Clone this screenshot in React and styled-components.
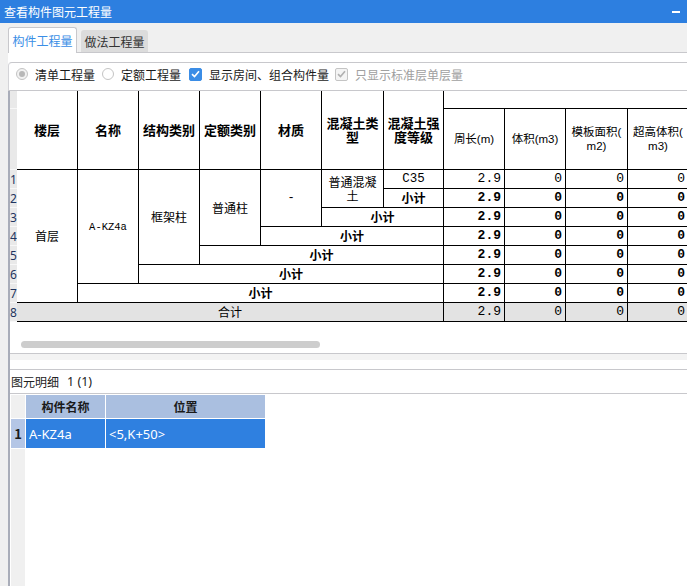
import React from "react";
import styled, { createGlobalStyle } from "styled-components";

const GlobalStyle = createGlobalStyle`
  html, body {
    margin: 0;
    padding: 0;
    background: #f0f0f0;
  }
  body {
    font-family: "Noto Sans CJK SC", "Noto Sans", sans-serif;
    font-size: 12px;
    color: #1a1a1a;
    overflow: hidden;
  }
  * { box-sizing: border-box; }
`;

const Window = styled.div`
  width: 687px;
  height: 586px;
  display: flex;
  flex-direction: column;
  overflow: hidden;
  background: #f0f0f0;
`;

const TitleBar = styled.div`
  height: 23px;
  flex: none;
  background: #2d7fe0;
  color: #fff;
  display: flex;
  align-items: center;
  justify-content: space-between;
  padding: 0 7px 0 4px;
  font-size: 12px;
`;

const MinButton = styled.span`
  width: 8px;
  height: 2px;
  background: #fff;
`;

const TabStrip = styled.div`
  height: 29px;
  flex: none;
  display: flex;
  align-items: flex-end;
  gap: 4px;
  padding-left: 8px;
`;

const Tab = styled.div`
  position: relative;
  z-index: 1;
  display: flex;
  align-items: center;
  justify-content: center;
  font-size: 12px;
  border-radius: 3px 3px 0 0;
  width: ${p => (p.$active ? 69 : 67)}px;
  height: ${p => (p.$active ? 26 : 22)}px;
  margin-bottom: ${p => (p.$active ? -1 : 0)}px;
  background: ${p => (p.$active ? "#fff" : "#dcdcdc")};
  color: ${p => (p.$active ? "#3a8ee6" : "#333")};
  border: ${p => (p.$active ? "1px solid #c8c8cc" : "none")};
  border-bottom: none;
`;

const Panel = styled.div`
  flex: 1;
  min-height: 0;
  margin-left: 8px;
  background: #fff;
  border-top: 1px solid #c8c8cc;
  padding-top: 9px;
  display: flex;
  flex-direction: column;
`;

const Options = styled.div`
  height: 29px;
  flex: none;
  display: flex;
  align-items: center;
  padding: 0 0 5px 7px;
  border-top: 1px solid #c8c8cc;
  border-left: 1px solid #d4d4d8;
  border-bottom: 1px solid #c8c8cc;
  border-top-left-radius: 4px;
`;

const Option = styled.label`
  display: flex;
  align-items: center;
  gap: 7px;
  margin-right: ${p => p.$mr}px;
  color: ${p => (p.$disabled ? "#a0a0a0" : "#1a1a1a")};
  font-size: 12px;
`;

const Radio = styled.span`
  width: 12px;
  height: 12px;
  border-radius: 50%;
  border: 1px solid #c4c4c4;
  background: ${p => (p.$on ? "#f2f2f2" : "#fff")};
  display: flex;
  align-items: center;
  justify-content: center;
  &::after {
    content: "";
    width: 6px;
    height: 6px;
    border-radius: 50%;
    background: ${p => (p.$on ? "#b8b8b8" : "transparent")};
  }
`;

const Check = styled.span`
  width: 13px;
  height: 13px;
  border-radius: 2px;
  display: flex;
  align-items: center;
  justify-content: center;
  background: ${p => (p.$disabled ? "#f4f4f4" : "#3b8de6")};
  border: 1px solid ${p => (p.$disabled ? "#c4c4c4" : "#3b8de6")};
`;

const Lower = styled.div`
  flex: 1;
  min-height: 0;
  display: flex;
  flex-direction: column;
  border-left: 2px solid #a9adb9;
`;

const GridSection = styled.div`
  height: 263px;
  flex: none;
  overflow: hidden;
  border-bottom: 1px solid #c8c8cc;
`;

const Table = styled.div`
  display: grid;
  grid-template-columns: 7px 61px 61px 61px 61px 61px 62px 60px 61px 61px 62px 61px;
  grid-template-rows: 18px 61px repeat(8, 19px);
  width: 679px;
  font-size: 12px;
  line-height: 14px;
  color: #000;
`;

const Cell = styled.div`
  grid-column: ${p => p.$c} / span ${p => p.$cs || 1};
  grid-row: ${p => p.$r} / span ${p => p.$rs || 1};
  border-right: 1px solid #000;
  border-bottom: 1px solid #000;
  display: flex;
  align-items: center;
  justify-content: ${p => (p.$right ? "flex-end" : "center")};
  text-align: center;
  padding: 0 3px;
  font-weight: ${p => (p.$bold ? 700 : 400)};
  background: ${p => (p.$shade ? "#e3e3e3" : "#fff")};
`;

const HeadCell = styled(Cell)`
  font-size: 13px;
  font-weight: 700;
`;

const UnitHead = styled(Cell)`
  font-size: 11.5px;
  font-family: "Liberation Sans", "Noto Sans CJK SC", sans-serif;
`;

const Code = styled(Cell)`
  font-family: "Liberation Mono", monospace;
  font-size: ${p => p.$size || 13}px;
`;

const RowNum = styled.div`
  grid-column: 1;
  grid-row: ${p => p.$r};
  background: #e9e9e9;
  border-bottom: 1px solid #f7f7f7;
  display: flex;
  align-items: center;
  justify-content: center;
  padding-top: 2px;
  font-family: "Noto Sans", sans-serif;
  font-size: 12px;
  color: #1f3560;
`;

const ScrollThumb = styled.div`
  margin: 19px 0 0 11px;
  width: 299px;
  height: 7px;
  border-radius: 4px;
  background: #cdcdcd;
`;

const Splitter = styled.div`
  height: 15px;
  flex: none;
  background: linear-gradient(#f3f3f3 0 6px, #fff 6px);
`;

const DetailLabel = styled.div`
  height: 25px;
  flex: none;
  display: flex;
  align-items: center;
  gap: 8px;
  padding-left: 1px;
  border-top: 1px solid #c8c8cc;
  border-bottom: 1px solid #c8c8cc;
  font-size: 12px;
  color: #222;
`;

const Count = styled.span`
  font-family: "Noto Sans", sans-serif;
  font-size: 12.5px;
`;

const DetailGrid = styled.div`
  flex: 1;
  display: grid;
  grid-template-columns: 14px 79px 159px;
  grid-template-rows: 23px 29px 1fr;
  gap: 1px;
  padding: 1px 0 0 1px;
  background: #fff;
`;

const Corner = styled.div`
  background: ${p => p.$sel ? "#b4c6e6" : "#f0f0f0"};
  display: flex;
  align-items: center;
  justify-content: center;
  font-weight: 700;
  font-size: 13px;
`;

const ColHead = styled.div`
  background: #aabfe0;
  display: flex;
  align-items: center;
  justify-content: center;
  font-weight: 700;
  font-size: 12px;
  color: #1a1a1a;
`;

const SelCell = styled.div`
  background: #2f80e0;
  color: #fff;
  display: flex;
  align-items: center;
  padding-left: 3px;
  font-family: "Noto Sans", sans-serif;
  font-size: 13px;
`;

const tick = (color) => (
  <svg width="9" height="8" viewBox="0 0 9 8">
    <path d="M1 4.2 L3.5 6.6 L8 1.2" fill="none" stroke={color} strokeWidth="1.6" />
  </svg>
);

const nums = [
  { v: ["2.9", "0", "0", "0"], bold: false },
  { v: ["2.9", "0", "0", "0"], bold: true },
  { v: ["2.9", "0", "0", "0"], bold: true },
  { v: ["2.9", "0", "0", "0"], bold: true },
  { v: ["2.9", "0", "0", "0"], bold: true },
  { v: ["2.9", "0", "0", "0"], bold: true },
  { v: ["2.9", "0", "0", "0"], bold: true },
  { v: ["2.9", "0", "0", "0"], bold: false, shade: true },
];

const heads = ["楼层", "名称", "结构类别", "定额类别", "材质", "混凝土类型", "混凝土强度等级"];

export default function App() {
  return (
    <Window>
      <GlobalStyle />
      <TitleBar>
        <span>查看构件图元工程量</span>
        <MinButton />
      </TitleBar>
      <TabStrip>
        <Tab $active>构件工程量</Tab>
        <Tab>做法工程量</Tab>
      </TabStrip>
      <Panel>
        <Options>
          <Option $mr={7}><Radio $on />清单工程量</Option>
          <Option $mr={8}><Radio />定额工程量</Option>
          <Option $mr={6}><Check>{tick("#fff")}</Check>显示房间、组合构件量</Option>
          <Option $disabled><Check $disabled>{tick("#b0b0b0")}</Check>只显示标准层单层量</Option>
        </Options>
        <Lower>
          <GridSection>
            <Table>
              <RowNum $r={1} />
              <RowNum $r={2} />
              {nums.map((_, i) => (
                <RowNum key={i} $r={i + 3}>{i + 1}</RowNum>
              ))}

              {heads.map((h, i) => (
                <HeadCell key={h} $c={i + 2} $r={1} $rs={2}>{h}</HeadCell>
              ))}
              <Cell $c={9} $cs={4} $r={1} />
              <UnitHead $c={9} $r={2}>周长(m)</UnitHead>
              <UnitHead $c={10} $r={2}>体积(m3)</UnitHead>
              <UnitHead $c={11} $r={2}>模板面积(<br />m2)</UnitHead>
              <UnitHead $c={12} $r={2}>超高体积(<br />m3)</UnitHead>

              <Cell $c={2} $r={3} $rs={7}>首层</Cell>
              <Code $c={3} $r={3} $rs={6} $size={10.5}>A-KZ4a</Code>
              <Cell $c={4} $r={3} $rs={5}>框架柱</Cell>
              <Cell $c={5} $r={3} $rs={4}>普通柱</Cell>
              <Code $c={6} $r={3} $rs={3} $size={12}>-</Code>
              <Cell $c={7} $r={3} $rs={2}>普通混凝土</Cell>
              <Code $c={8} $r={3} $size={12.5}>C35</Code>
              <Cell $c={8} $r={4} $bold>小计</Cell>
              <Cell $c={7} $cs={2} $r={5} $bold>小计</Cell>
              <Cell $c={6} $cs={3} $r={6} $bold>小计</Cell>
              <Cell $c={5} $cs={4} $r={7} $bold>小计</Cell>
              <Cell $c={4} $cs={5} $r={8} $bold>小计</Cell>
              <Cell $c={3} $cs={6} $r={9} $bold>小计</Cell>
              <Cell $c={2} $cs={7} $r={10} $shade>合计</Cell>

              {nums.map((row, i) =>
                row.v.map((v, j) => (
                  <Code
                    key={`${i}-${j}`}
                    $c={j + 9}
                    $r={i + 3}
                    $right
                    $bold={row.bold}
                    $shade={row.shade}
                  >
                    {v}
                  </Code>
                ))
              )}
            </Table>
            <ScrollThumb />
          </GridSection>
          <Splitter />
          <DetailLabel>
            <span>图元明细</span>
            <Count>1 (1)</Count>
          </DetailLabel>
          <DetailGrid>
            <Corner />
            <ColHead>构件名称</ColHead>
            <ColHead>位置</ColHead>
            <Corner $sel>1</Corner>
            <SelCell>A-KZ4a</SelCell>
            <SelCell>&lt;5,K+50&gt;</SelCell>
            <Corner />
          </DetailGrid>
        </Lower>
      </Panel>
    </Window>
  );
}
